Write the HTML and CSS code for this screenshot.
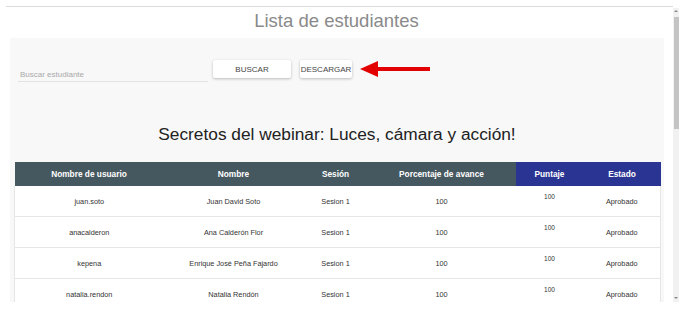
FILE: index.html
```html
<!DOCTYPE html>
<html lang="es">
<head>
    <meta charset="UTF-8">
    <meta name="viewport" content="width=device-width, initial-scale=1.0">
    <title>Lista de estudiantes</title>
    <link rel="stylesheet" href="styles.css">
</head>
<body>
    <div class="window">
        <div class="page">
            <div class="topline"></div>
            <h1 class="title">Lista de estudiantes</h1>

            <div class="panel">
                <div class="toolbar">
                    <div class="search">
                        <input type="text" placeholder="Buscar estudiante">
                    </div>
                    <button class="btn">BUSCAR</button>
                    <button class="btn btn-small">DESCARGAR</button>
                    <svg class="arrow" width="72" height="18" viewBox="0 0 72 18">
                        <polygon points="0,9 18,1 18,7 70,7 70,11 18,11 18,17" fill="#e30000"/>
                    </svg>
                </div>

                <h2 class="course">Secretos del webinar: Luces, cámara y acción!</h2>

                <table class="students">
                    <thead>
                        <tr>
                            <th class="c-user">Nombre de usuario</th>
                            <th class="c-name">Nombre</th>
                            <th class="c-session">Sesión</th>
                            <th class="c-progress">Porcentaje de avance</th>
                            <th class="c-score highlight">Puntaje</th>
                            <th class="c-state highlight">Estado</th>
                        </tr>
                    </thead>
                    <tbody>
                        <tr>
                            <td>juan.soto</td>
                            <td>Juan David Soto</td>
                            <td>Sesion 1</td>
                            <td>100</td>
                            <td class="score">100</td>
                            <td>Aprobado</td>
                        </tr>
                        <tr>
                            <td>anacalderon</td>
                            <td>Ana Calderón Flor</td>
                            <td>Sesion 1</td>
                            <td>100</td>
                            <td class="score">100</td>
                            <td>Aprobado</td>
                        </tr>
                        <tr>
                            <td>kepena</td>
                            <td>Enrique José Peña Fajardo</td>
                            <td>Sesion 1</td>
                            <td>100</td>
                            <td class="score">100</td>
                            <td>Aprobado</td>
                        </tr>
                        <tr>
                            <td>natalia.rendon</td>
                            <td>Natalia Rendón</td>
                            <td>Sesion 1</td>
                            <td>100</td>
                            <td class="score">100</td>
                            <td>Aprobado</td>
                        </tr>
                    </tbody>
                </table>
            </div>
        </div>

        <div class="scrollbar">
            <span class="arrow-up"></span>
            <div class="thumb"></div>
            <span class="arrow-down"></span>
        </div>
    </div>
</body>
</html>
```

FILE: styles.css
```css
body {
    font-family: "Liberation Sans", Arial, sans-serif;
    background-color: #fff;
    margin: 0;
    padding: 0;
}

.window {
    display: flex;
    height: 302px;
    overflow: hidden;
}

.page {
    width: 673px;
    overflow: hidden;
}

.topline {
    margin: 6px 0 0 6px;
    border-top: 1px solid #dcdcdc;
}

.title {
    margin: 0;
    height: 31px;
    line-height: 28px;
    text-align: center;
    font-size: 18.5px;
    font-weight: normal;
    color: #8a8a8a;
}

.panel {
    margin-left: 10px;
    width: 654px;
    height: 300px;
    padding-top: 22px;
    background-color: #f8f8f8;
}

.toolbar {
    display: flex;
    align-items: flex-start;
    height: 22px;
}

.search {
    margin-left: 8px;
    width: 190px;
    height: 21px;
    border-bottom: 1px solid #e2e2e2;
}

.search input {
    width: 100%;
    height: 21px;
    padding: 7px 0 0 2px;
    box-sizing: border-box;
    border: none;
    background: transparent;
    font-family: "Liberation Sans", Arial, sans-serif;
    font-size: 8px;
    outline: none;
}

.search input::placeholder {
    color: #a8a8a8;
}

.btn {
    margin-left: 5px;
    width: 78px;
    height: 18px;
    padding: 0;
    border: none;
    border-radius: 2px;
    background-color: #fff;
    box-shadow: 0 1px 3px rgba(0, 0, 0, 0.25);
    font-family: "Liberation Sans", Arial, sans-serif;
    font-size: 8px;
    color: #444;
}

.btn-small {
    margin-left: 9px;
    width: 52px;
}

.arrow {
    margin: 0 0 0 8px;
}

.course {
    margin: 40px 0 0;
    height: 25px;
    line-height: 25px;
    text-align: center;
    font-size: 17.3px;
    font-weight: normal;
    color: #222;
}

.students {
    margin: 15px 0 0 4px;
    width: 647px;
    border-collapse: collapse;
    table-layout: fixed;
}

.students th {
    height: 24px;
    padding: 0;
    background-color: #46585f;
    color: #fff;
    font-size: 8.3px;
    font-weight: bold;
    text-align: center;
}

.students th.highlight {
    background-color: #2a3593;
}

.c-user { width: 149px; }
.c-name { width: 140px; }
.c-session { width: 64px; }
.c-progress { width: 148px; }
.c-score { width: 68px; }

.students td {
    height: 30px;
    padding: 0;
    background-color: #fff;
    border-bottom: 1px solid #e6e6e6;
    text-align: center;
    font-size: 7.3px;
    color: #333;
}

.students td:first-child {
    border-left: 1px solid #e6e6e6;
}

.students td:last-child {
    border-right: 1px solid #e6e6e6;
}

.students td.score {
    vertical-align: top;
    padding-top: 7px;
    height: 23px;
    font-size: 6.5px;
}

.scrollbar {
    display: flex;
    flex-direction: column;
    align-items: center;
    margin-top: 8px;
    width: 6px;
    height: 294px;
    background-color: #f1f1f1;
}

.thumb {
    margin-top: 5px;
    width: 5px;
    height: 112px;
    background-color: #c4c4c4;
}

.arrow-up,
.arrow-down {
    width: 0;
    height: 0;
    border-left: 2px solid transparent;
    border-right: 2px solid transparent;
}

.arrow-up {
    margin-top: 2px;
    border-bottom: 2px solid #888;
}

.arrow-down {
    margin-top: auto;
    margin-bottom: 3px;
    border-top: 2px solid #888;
}
```
